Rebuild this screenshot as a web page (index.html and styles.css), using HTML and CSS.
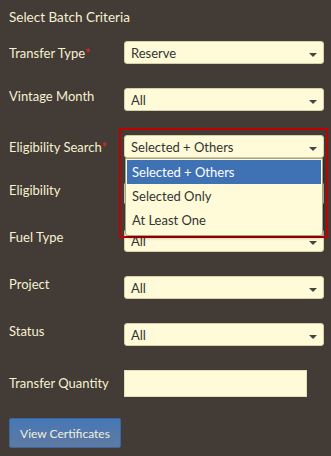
FILE: index.html
```html
<!DOCTYPE html>
<html lang="en">
<head>
  <meta charset="UTF-8" />
  <meta name="viewport" content="width=device-width, initial-scale=1.0"/>
  <title>Select Batch Criteria</title>
  <link rel="stylesheet" href="styles.css">
</head>
<body>

  <div class="panel">
    <h2 class="title">Select Batch Criteria</h2>

    <div class="form">
      <div class="row req">
        <label>Transfer Type<span class="star">*</span></label>
        <div class="select"><span>Reserve</span><i class="caret"></i></div>
      </div>

      <div class="row">
        <label>Vintage Month</label>
        <div class="select"><span>All</span><i class="caret"></i></div>
      </div>

      <div class="row req">
        <label>Eligibility Search<span class="star">*</span></label>
        <div class="select-wrap">
          <div class="select"><span>Selected + Others</span><i class="caret"></i></div>
          <div class="focus-ring"></div>
          <ul class="dropdown">
            <li class="active">Selected + Others</li>
            <li>Selected Only</li>
            <li>At Least One</li>
          </ul>
        </div>
      </div>

      <!-- covered by the open list above -->
      <div class="row">
        <label>Eligibility</label>
        <div class="select"><i class="caret"></i></div>
      </div>

      <div class="row">
        <label>Fuel Type</label>
        <div class="select"><span>All</span><i class="caret"></i></div>
      </div>

      <div class="row">
        <label>Project</label>
        <div class="select"><span>All</span><i class="caret"></i></div>
      </div>

      <div class="row">
        <label>Status</label>
        <div class="select"><span>All</span><i class="caret"></i></div>
      </div>

      <div class="row qty">
        <label>Transfer Quantity</label>
        <input type="text" class="text-input">
      </div>
    </div>

    <button class="btn">View Certificates</button>
  </div>

</body>
</html>
```

FILE: styles.css
```css
body {
  margin: 0;
  padding: 0;
  background-color: #433b35;
  font-family: Lato, "Liberation Sans", sans-serif;
  color: #f6f0d2;
}

.panel {
  padding: 8px 7px 8px 9px;
}

.title {
  margin: 0;
  font-size: 13.5px;
  font-weight: normal;
  line-height: 18px;
  height: 33px;
}

.row {
  display: flex;
  height: 47px;
}

.row label {
  width: 115px;
  flex-shrink: 0;
  font-size: 13px;
  line-height: 16px;
  padding-top: 0;
}

.row.req label {
  padding-top: 4px;
}

.star {
  color: #e8242a;
}

.select {
  position: relative;
  box-sizing: border-box;
  width: 200px;
  height: 23px;
  padding-left: 6px;
  background: #fffbd8;
  border: 1px solid #d8cfa8;
  border-radius: 3px;
  color: #333;
  font-size: 13px;
  line-height: 22px;
}

.caret {
  position: absolute;
  right: 6px;
  top: 11px;
  width: 0;
  height: 0;
  border-left: 4px solid transparent;
  border-right: 4px solid transparent;
  border-top: 4px solid #444;
}

.select-wrap {
  position: relative;
  z-index: 2;
}

.focus-ring {
  position: absolute;
  left: -5px;
  top: -7px;
  width: 205px;
  height: 106px;
  border: 2px solid #c30000;
}

.dropdown {
  position: absolute;
  left: 1px;
  top: 23px;
  width: 198px;
  box-sizing: border-box;
  margin: 0;
  padding: 1px 1px 3px;
  list-style: none;
  background: #fffbd8;
  border: 1px solid #a9a38a;
  border-radius: 0 0 3px 3px;
  box-shadow: 1px 2px 3px rgba(0, 0, 0, 0.35);
  color: #333;
  font-size: 13px;
}

.dropdown li {
  height: 24px;
  line-height: 24px;
  padding-left: 5px;
}

.dropdown li.active {
  background: #3f72b5;
  color: #fff;
}

.row.qty {
  height: 48px;
}

.row.qty label {
  line-height: 27px;
}

.text-input {
  box-sizing: border-box;
  width: 183px;
  height: 27px;
  margin: 0;
  background: #fffbd8;
  border: 1px solid #e6ddb4;
  font-family: inherit;
}

.btn {
  display: block;
  width: 112px;
  height: 30px;
  padding: 0;
  background: linear-gradient(#4677b6, #5f7aa1);
  border: 1px solid #3a68a6;
  border-radius: 2px;
  color: #f3efdc;
  font-family: Lato, "Liberation Sans", sans-serif;
  font-size: 12px;
}
```
